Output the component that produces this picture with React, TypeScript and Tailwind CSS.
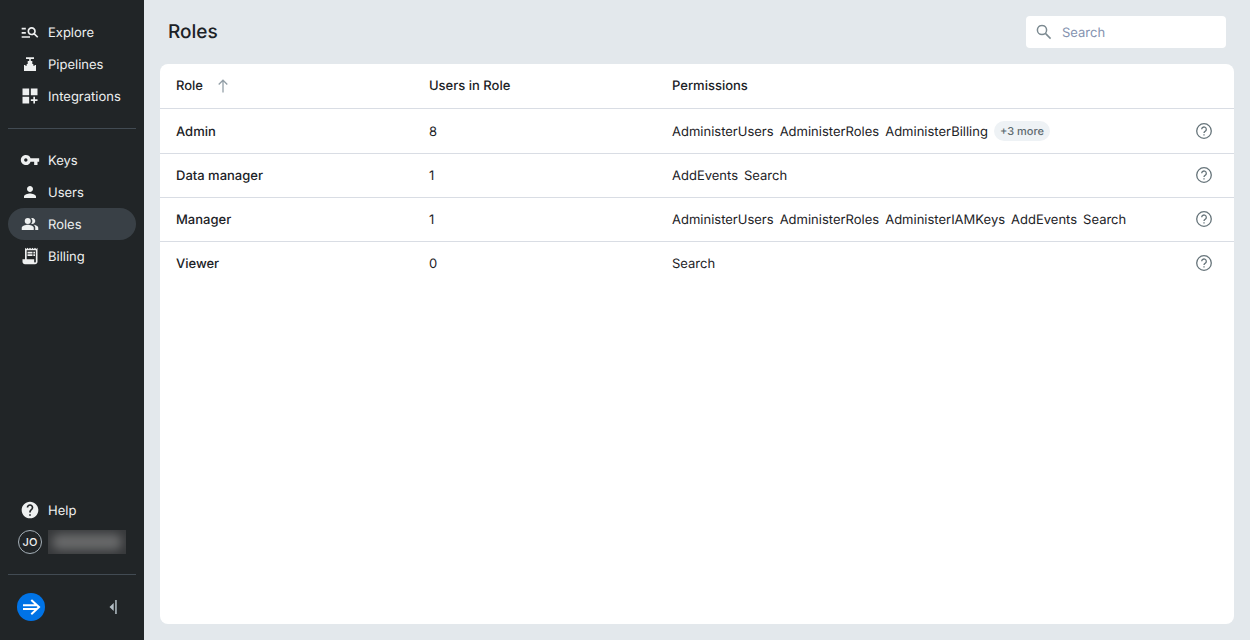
import React, { useState } from "react";
import type { IconType } from "react-icons";
import {
  MdDashboardCustomize,
  MdHelp,
  MdManageSearch,
  MdPeopleAlt,
  MdPerson,
  MdReceiptLong,
  MdVpnKey,
} from "react-icons/md";

type IconProps = { className?: string };

type NavItem = {
  id: string;
  label: string;
  icon: IconType | React.FC<IconProps>;
  small?: boolean;
};

type Role = {
  name: string;
  users: number;
  permissions: string[];
  more?: number;
};

const PipelineIcon: React.FC<IconProps> = ({ className }) => (
  <svg viewBox="0 0 20 20" fill="currentColor" className={className}>
    <path d="M6 3.300h8V5h-3.200v2h1.500v3h1v1.700h1.400V11H16v6H4v-6h1.300v.7h1.400V10h1V7h1.500V5H6z" />
  </svg>
);

const SearchIcon: React.FC<IconProps> = ({ className }) => (
  <svg viewBox="0 0 20 20" fill="none" stroke="currentColor" strokeWidth="1.5" className={className}>
    <circle cx="8" cy="8" r="4.600" />
    <path d="M11.400 11.400l5.200 5.200" />
  </svg>
);

const HelpOutlineIcon: React.FC<IconProps> = ({ className }) => (
  <svg viewBox="0 0 16 16" fill="none" stroke="currentColor" strokeWidth="1.3" className={className}>
    <circle cx="8" cy="8" r="7.300" />
    <path d="M5.700 6.300a2.300 2.300 0 1 1 3.600 1.900C8.500 8.800 8 9.100 8 10.100" />
    <path d="M8 11.200v1.400" />
  </svg>
);

const SortArrow: React.FC<IconProps> = ({ className }) => (
  <svg viewBox="0 0 12 14" fill="none" stroke="currentColor" strokeWidth="1.300" className={className}>
    <path d="M6 13.500V1.500M1.700 5.500L6 1.200l4.300 4.300" />
  </svg>
);

const LogoMark: React.FC<IconProps> = ({ className }) => (
  <svg viewBox="0 0 28 28" fill="none" className={className}>
    <circle cx="14" cy="14" r="14" fill="#0073e6" />
    <path
      d="M6 12.200h14.500M6 16h14.500M14.300 7l7.700 7.100-7.700 7.100"
      stroke="white"
      strokeWidth="2"
    />
  </svg>
);

const CollapseIcon: React.FC<IconProps> = ({ className }) => (
  <svg viewBox="0 0 8 14" fill="currentColor" className={className}>
    <path d="M4.700 3v8L.5 7zM6.200 0h1.500v14H6.200z" />
  </svg>
);

const mainNav: NavItem[] = [
  { id: "explore", label: "Explore", icon: MdManageSearch },
  { id: "pipelines", label: "Pipelines", icon: PipelineIcon },
  { id: "integrations", label: "Integrations", icon: MdDashboardCustomize },
];

const adminNav: NavItem[] = [
  { id: "keys", label: "Keys", icon: MdVpnKey },
  { id: "users", label: "Users", icon: MdPerson, small: true },
  { id: "roles", label: "Roles", icon: MdPeopleAlt, small: true },
  { id: "billing", label: "Billing", icon: MdReceiptLong },
];

const roles: Role[] = [
  {
    name: "Admin",
    users: 8,
    permissions: ["AdministerUsers", "AdministerRoles", "AdministerBilling"],
    more: 3,
  },
  { name: "Data manager", users: 1, permissions: ["AddEvents", "Search"] },
  {
    name: "Manager",
    users: 1,
    permissions: [
      "AdministerUsers",
      "AdministerRoles",
      "AdministerIAMKeys",
      "AddEvents",
      "Search",
    ],
  },
  { name: "Viewer", users: 0, permissions: ["Search"] },
];

const NavLink: React.FC<{ item: NavItem; active?: boolean }> = ({ item, active }) => {
  const Icon = item.icon;
  return (
    <a
      href={`#${item.id}`}
      aria-current={active ? "page" : undefined}
      className={`flex items-center gap-2 h-8 pl-3 rounded-full ${
        active ? "bg-[#394046]" : "hover:bg-[#2c3135]"
      }`}
    >
      <span className="flex items-center justify-center w-5 h-5 shrink-0">
        <Icon className={item.small ? "w-[18px] h-[18px]" : "w-5 h-5"} />
      </span>
      <span className="pt-0.5">{item.label}</span>
    </a>
  );
};

const Sidebar: React.FC = () => (
  <aside className="flex flex-col w-36 shrink-0 px-2 pt-4 bg-[#212527] text-[#eef0f0]">
    <nav className="flex flex-col">
      {mainNav.map((item) => (
        <NavLink key={item.id} item={item} />
      ))}
      <hr className="mt-4 mb-[15px] border-[#424b53]" />
      {adminNav.map((item) => (
        <NavLink key={item.id} item={item} active={item.id === "roles"} />
      ))}
    </nav>

    <div className="mt-auto">
      <NavLink item={{ id: "help", label: "Help", icon: MdHelp }} />
      <button type="button" className="flex items-center gap-1.5 h-8 pl-2.5" aria-label="Account">
        <span className="flex items-center justify-center w-6 h-6 border border-[#a5b0b8] rounded-full text-[11px] font-medium">
          JO
        </span>
        <span className="w-[78px] h-6 p-1 overflow-hidden bg-[#37393b]">
          <span className="block w-full h-full bg-[#68696a] rounded-lg blur-[5px]" />
        </span>
      </button>
    </div>

    <div className="flex items-center justify-between h-[66px] mt-4 pl-[9px] pr-[19px] pb-0.5 border-t border-[#424b53]">
      <a href="#home" aria-label="Home">
        <LogoMark className="w-7 h-7" />
      </a>
      <button type="button" aria-label="Collapse sidebar" className="text-[#b4bfc6]">
        <CollapseIcon className="w-2 h-3.5" />
      </button>
    </div>
  </aside>
);

const RolesTable: React.FC<{ rows: Role[] }> = ({ rows }) => (
  <table className="w-full table-fixed text-left">
    <thead>
      <tr className="h-11 border-b border-[#d9dde4]">
        <th className="w-[253px] px-4 font-medium">
          <button
            type="button"
            className="flex items-center gap-3.5 [text-rendering:inherit]"
          >
            Role
            <SortArrow className="w-3 h-3.5 text-[#94a0a8]" />
          </button>
        </th>
        <th className="w-[243px] px-4 font-medium">Users in Role</th>
        <th className="px-4 font-medium">Permissions</th>
        <th className="w-16" aria-label="Details" />
      </tr>
    </thead>
    <tbody>
      {rows.map((role) => (
        <tr
          key={role.name}
          className="h-11 first:h-[45px] border-b border-[#d9dde4] last:border-b-0"
        >
          <td className="px-4 pt-0.5 font-medium">{role.name}</td>
          <td className="px-4 pt-0.5">{role.users}</td>
          <td className="px-4">
            <div className="flex items-center gap-1.5">
              {role.permissions.map((permission) => (
                <span key={permission} className="pt-0.5">
                  {permission}
                </span>
              ))}
              {role.more && (
                <button
                  type="button"
                  className="h-5 px-1.5 rounded-full bg-[#eef2f5] text-[#5e6b70] text-[11px] font-medium [text-rendering:inherit]"
                >
                  +{role.more} more
                </button>
              )}
            </div>
          </td>
          <td>
            <button
              type="button"
              aria-label={`About ${role.name}`}
              className="flex items-center justify-center ml-[26px] text-[#66747a]"
            >
              <HelpOutlineIcon className="w-4 h-4" />
            </button>
          </td>
        </tr>
      ))}
    </tbody>
  </table>
);

export default function App() {
  const [query, setQuery] = useState("");
  const visible = roles.filter((role) =>
    role.name.toLowerCase().includes(query.toLowerCase())
  );

  return (
    <div className="flex min-h-screen bg-[#e3e8ec] font-['Inter',sans-serif] text-[13px] leading-5 text-[#1c2226] antialiased [text-rendering:geometricPrecision]">
      <Sidebar />

      <main className="flex flex-col flex-1 min-w-0 px-4 pb-4">
        {/* Header */}
        <header className="flex items-center justify-between h-16 px-2">
          <h1 className="text-[19px] font-medium">Roles</h1>
          <label className="flex items-center gap-2 w-[200px] h-8 px-2 rounded bg-white">
            <SearchIcon className="w-5 h-5 shrink-0 text-[#7c8a91]" />
            <input
              type="search"
              aria-label="Search roles"
              placeholder="Search"
              value={query}
              onChange={(e) => setQuery(e.target.value)}
              className="w-full pt-0.5 outline-none placeholder:text-[#8593b0] [text-rendering:inherit]"
            />
          </label>
        </header>

        {/* Roles */}
        <section className="flex-1 rounded-lg bg-white overflow-hidden">
          <RolesTable rows={visible} />
        </section>
      </main>
    </div>
  );
}
